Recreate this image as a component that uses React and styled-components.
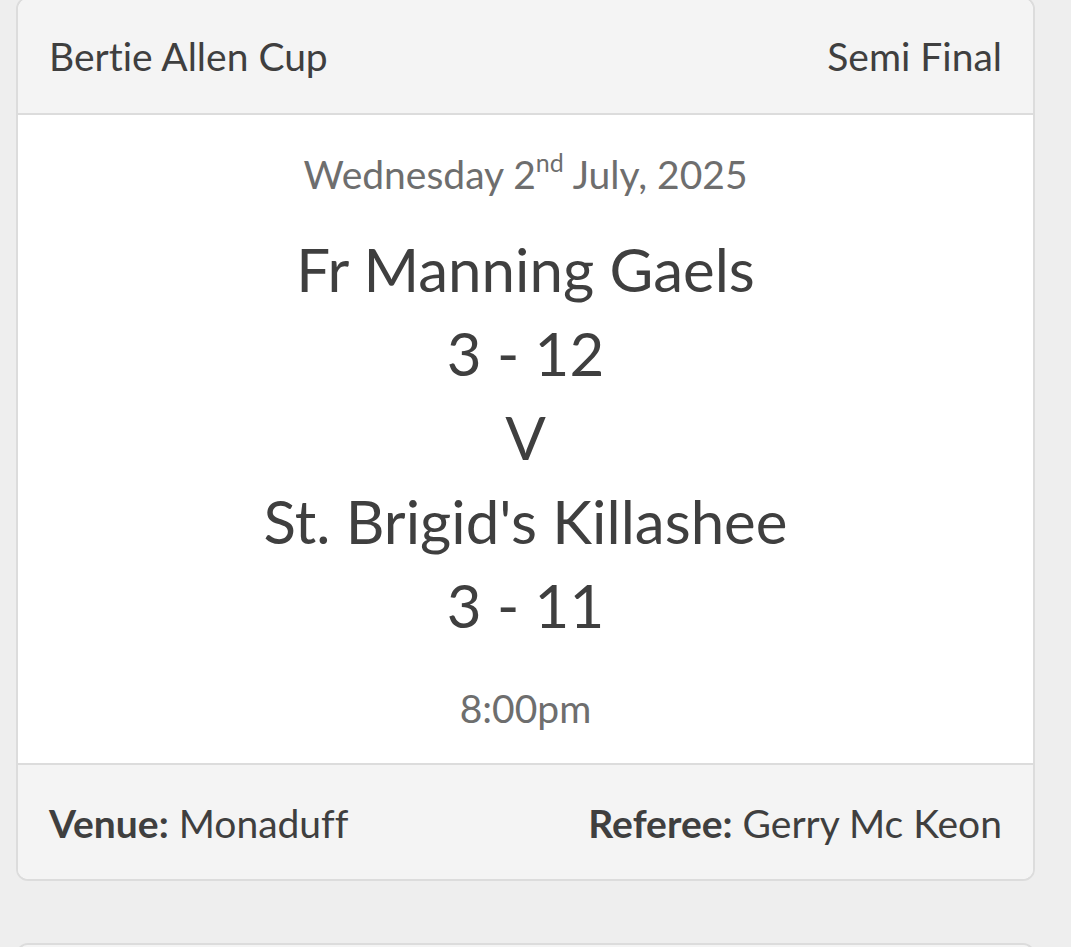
import React from "react";
import styled, { createGlobalStyle } from "styled-components";

const GlobalStyle = createGlobalStyle`
  body {
    margin: 0;
    background: #eeeeee;
    font-family: Lato, "Open Sans", Arial, sans-serif;
    font-variant-ligatures: none;
    color: #3f3f3f;
  }
`;

const Page = styled.div`
  padding: 0 36px 0 16px;
  margin-top: -3px;
  display: flex;
  flex-direction: column;
  gap: 62px;
`;

const Card = styled.div`
  background: #ffffff;
  border: 2px solid #dcdcdc;
  border-radius: 12px;
  overflow: hidden;
`;

const Bar = styled.div`
  display: flex;
  justify-content: space-between;
  align-items: center;
  background: #f4f4f4;
  padding: ${(props) => (props.bottom ? "35px 31px 33px" : "34px 31px")};
  font-size: 39px;
  line-height: 46px;
  border-top: ${(props) => (props.bottom ? "2px solid #dcdcdc" : "none")};
  border-bottom: ${(props) => (props.bottom ? "none" : "2px solid #dcdcdc")};
`;

const Label = styled.strong`
  font-weight: 700;
`;

const Body = styled.div`
  padding: 39px 20px 35px;
  text-align: center;
`;

const Meta = styled.div`
  color: #6e6e6e;
  font-size: 39px;
  line-height: 40px;
`;

const Sup = styled.sup`
  font-size: 25px;
  line-height: 0;
  position: relative;
  top: -3px;
`;

const Teams = styled.div`
  margin: 33px 0 41px;
  font-size: 60px;
  line-height: 84px;
  color: #3f3f3f;
`;

const fixture = {
  competition: "Bertie Allen Cup",
  round: "Semi Final",
  home: "Fr Manning Gaels",
  homeScore: "3 - 12",
  away: "St. Brigid's Killashee",
  awayScore: "3 - 11",
  time: "8:00pm",
  venue: "Monaduff",
  referee: "Gerry Mc Keon",
};

export default function App() {
  return (
    <>
      <GlobalStyle />
      <Page>
        <Card>
          <Bar>
            <span>{fixture.competition}</span>
            <span>{fixture.round}</span>
          </Bar>
          <Body>
            <Meta>
              Wednesday 2<Sup>nd</Sup> July, 2025
            </Meta>
            <Teams>
              <div>{fixture.home}</div>
              <div>{fixture.homeScore}</div>
              <div>V</div>
              <div>{fixture.away}</div>
              <div>{fixture.awayScore}</div>
            </Teams>
            <Meta>{fixture.time}</Meta>
          </Body>
          <Bar bottom>
            <span>
              <Label>Venue:</Label> {fixture.venue}
            </span>
            <span>
              <Label>Referee:</Label> {fixture.referee}
            </span>
          </Bar>
        </Card>
        <Card>
          <Bar>
            <span>&nbsp;</span>
          </Bar>
        </Card>
      </Page>
    </>
  );
}
